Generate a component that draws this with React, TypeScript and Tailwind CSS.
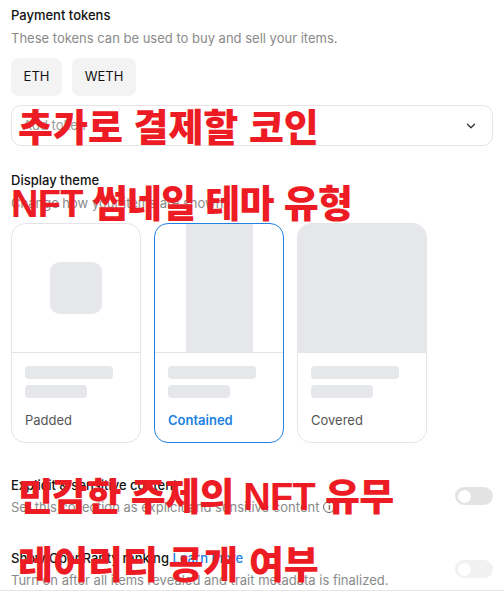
import { ChevronDown } from 'lucide-react';

const themes = [
  { id: 'padded', label: 'Padded' },
  { id: 'contained', label: 'Contained' },
  { id: 'covered', label: 'Covered' },
];

function Preview({ kind }: { kind: string }) {
  if (kind === 'padded') {
    return (
      <div className="flex h-[129px] items-center justify-center border-b border-[#e5e5e5]">
        <div className="h-[52px] w-[52px] rounded-[10px] bg-[#e5e7ea]" />
      </div>
    );
  }
  if (kind === 'contained') {
    return (
      <div className="flex h-[129px] justify-center border-b border-[#e5e5e5]">
        <div className="h-full w-[67px] bg-[#e5e7ea]" />
      </div>
    );
  }
  return <div className="h-[129px] rounded-t-[13px] border-b border-[#e5e5e5] bg-[#e5e7ea]" />;
}

function Toggle({ light }: { light?: boolean }) {
  return (
    <div className={`flex h-[18px] w-[38px] items-center rounded-full px-[3px] ${light ? 'bg-[#f1f1f1]' : 'bg-[#e3e3e3]'}`}>
      <div className="h-[13px] w-[13px] rounded-full bg-white" />
    </div>
  );
}

// red annotation captions laid over the screenshot
function Overlay({ text, className }: { text: string; className: string }) {
  return (
    <span className={`pointer-events-none absolute whitespace-nowrap text-[38px] font-black leading-none text-[#ed1c24] ${className}`} style={{ fontFamily: '"Liberation Sans", "Noto Sans CJK KR", sans-serif' }}>
      {text}
    </span>
  );
}

export default function App() {
  return (
    <div className="relative h-[600px] w-[504px] overflow-hidden bg-white text-[13px] text-[#121212]" style={{ fontFamily: 'Inter, "Noto Sans", sans-serif' }}>
      <div className="px-[11px] pt-[6px]">
        <section>
          <h3 className="text-[13px] font-medium leading-[18px]">Payment tokens</h3>
          <p className="mt-[5px] leading-[18px] text-[#8a8a8a]">These tokens can be used to buy and sell your items.</p>
          <div className="mt-[11px] flex gap-[10px]">
            <div className="flex h-[38px] w-[51px] items-center justify-center rounded-[8px] bg-[#f3f3f3]">ETH</div>
            <div className="flex h-[38px] w-[64px] items-center justify-center rounded-[8px] bg-[#f3f3f3]">WETH</div>
          </div>
          <div className="mt-[9px] flex h-[41px] items-center justify-between rounded-[10px] border border-[#e5e5e5] pl-[11px] pr-[14px]">
            <span className="text-[#9a9a9a]">Add token</span>
            <ChevronDown className="h-[14px] w-[14px] text-[#333]" strokeWidth={2.2} />
          </div>
        </section>

        <section className="mt-[25px]">
          <h3 className="text-[13px] font-medium leading-[18px]">Display theme</h3>
          <p className="mt-[5px] leading-[18px] text-[#8a8a8a]">Change how your items are shown.</p>
          <div className="mt-[11px] flex gap-[13px]">
            {themes.map((t) => {
              const selected = t.id === 'contained';
              return (
                <div key={t.id} className={`flex h-[220px] w-[130px] flex-col overflow-hidden rounded-[14px] border ${selected ? 'border-[#2081e2]' : 'border-[#e5e5e5]'}`}>
                  <Preview kind={t.id} />
                  <div className="flex flex-1 flex-col px-[13px] pt-[13px]">
                    <div className="h-[13px] w-[88px] rounded-[4px] bg-[#e5e7ea]" />
                    <div className="mt-[6px] h-[13px] w-[62px] rounded-[4px] bg-[#e5e7ea]" />
                    <span className={`mt-[13px] ${selected ? 'font-semibold text-[#2081e2]' : 'text-[#555]'}`}>{t.label}</span>
                  </div>
                </div>
              );
            })}
          </div>
        </section>

        <section className="mt-[33px] flex items-center justify-between">
          <div>
            <h3 className="text-[13px] font-medium leading-[18px]">Explicit &amp; sensitive content</h3>
            <p className="mt-[4px] flex items-center gap-[4px] leading-[18px] text-[#8a8a8a]">
              Set this collection as explicit and sensitive content
              <span className="flex h-[12px] w-[12px] items-center justify-center rounded-full border-[1.5px] border-[#666] text-[8px] font-bold leading-none text-[#666]">i</span>
            </p>
          </div>
          <Toggle />
        </section>

        <section className="-mx-[11px] mt-[33px] flex items-center justify-between border-b border-[#e5e5e5] px-[11px] pb-[1px]">
          <div>
            <h3 className="text-[13px] font-medium leading-[18px]">
              Show OpenRarity ranking <span className="font-medium text-[#2081e2]">Learn more</span>
            </h3>
            <p className="mt-[4px] leading-[18px] text-[#8a8a8a]">Turn on after all items revealed and trait metadata is finalized.</p>
          </div>
          <Toggle light />
        </section>
      </div>

      <Overlay text="추가로 결제할 코인" className="left-[18px] top-[109px]" />
      <Overlay text="NFT 썸네일 테마 유형" className="left-[11px] top-[185px] tracking-[-0.7px]" />
      <Overlay text="민감한 주제의 NFT 유무" className="left-[18px] top-[478px] tracking-[-0.7px]" />
      <Overlay text="레어리티 공개 여부" className="left-[18px] top-[546px]" />
    </div>
  );
}
